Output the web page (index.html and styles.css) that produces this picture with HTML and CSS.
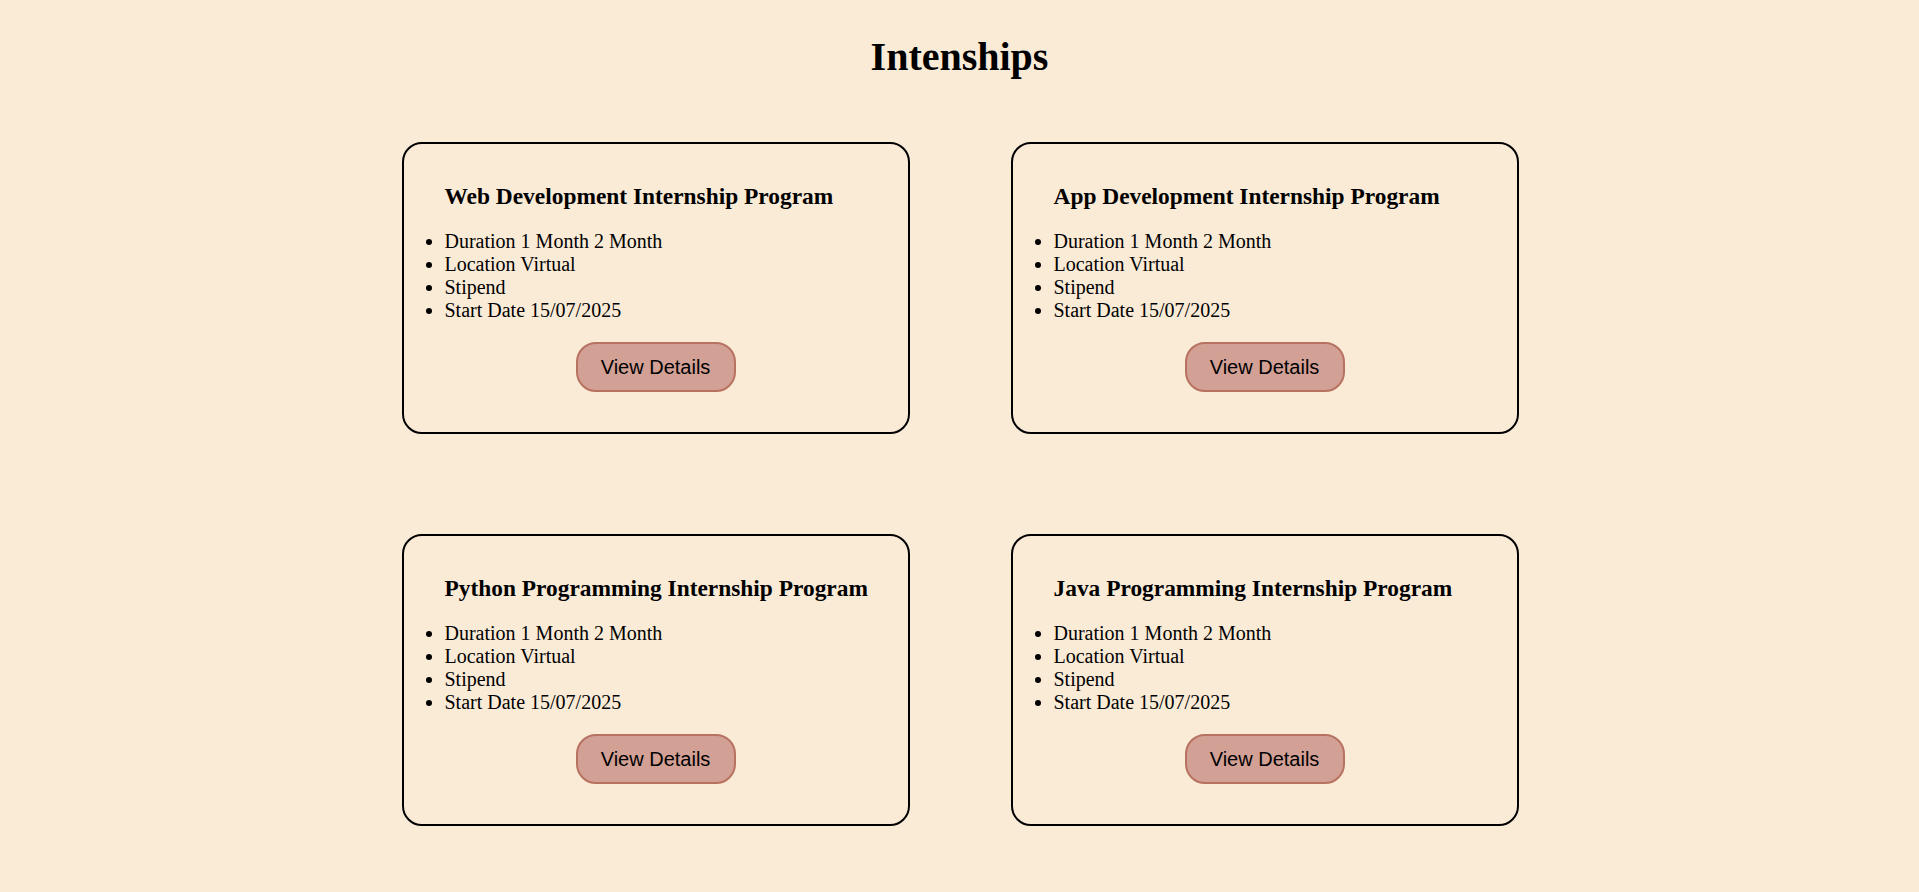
FILE: index.html
```html
<!DOCTYPE html>
<html lang="en">
<head>
<meta charset="utf-8">
<title>Intenships</title>
<link rel="stylesheet" href="styles.css">
</head>
<body>
  <h1 class="page-title">Intenships</h1>
  <main class="grid">
    <section class="card">
      <h3 class="card-title">Web Development Internship Program</h3>
      <ul class="details">
        <li>Duration 1 Month 2 Month</li>
        <li>Location Virtual</li>
        <li>Stipend</li>
        <li>Start Date 15/07/2025</li>
      </ul>
      <div class="actions"><button class="btn">View Details</button></div>
    </section>
    <section class="card">
      <h3 class="card-title">App Development Internship Program</h3>
      <ul class="details">
        <li>Duration 1 Month 2 Month</li>
        <li>Location Virtual</li>
        <li>Stipend</li>
        <li>Start Date 15/07/2025</li>
      </ul>
      <div class="actions"><button class="btn">View Details</button></div>
    </section>
    <section class="card">
      <h3 class="card-title">Python Programming Internship Program</h3>
      <ul class="details">
        <li>Duration 1 Month 2 Month</li>
        <li>Location Virtual</li>
        <li>Stipend</li>
        <li>Start Date 15/07/2025</li>
      </ul>
      <div class="actions"><button class="btn">View Details</button></div>
    </section>
    <section class="card">
      <h3 class="card-title">Java Programming Internship Program</h3>
      <ul class="details">
        <li>Duration 1 Month 2 Month</li>
        <li>Location Virtual</li>
        <li>Stipend</li>
        <li>Start Date 15/07/2025</li>
      </ul>
      <div class="actions"><button class="btn">View Details</button></div>
    </section>
  </main>
</body>
</html>
```

FILE: styles.css
```css
html, body {
  margin: 0;
  padding: 0;
  background: #faebd7;
}
body {
  font-family: "Liberation Serif", "Times New Roman", serif;
  color: #000;
  font-size: 20px;
}
.page-title {
  margin: 34px 0 0;
  font-size: 40px;
  line-height: 46px;
  font-weight: bold;
  text-align: center;
}
.grid {
  display: grid;
  grid-template-columns: 508px 508px;
  column-gap: 101px;
  row-gap: 100px;
  justify-content: center;
  margin-top: 62px;
  padding: 0 0 40px 1px;
}
.card {
  box-sizing: border-box;
  width: 508px;
  height: 292px;
  border: 2px solid #000;
  border-radius: 20px;
  padding: 0 20px 0 41px;
}
.card-title {
  margin: 39px 0 0;
  font-size: 23.4px;
  line-height: 27px;
  font-weight: bold;
}
.details {
  margin: 20px 0 0;
  padding: 0;
  line-height: 23px;
}
.actions {
  display: flex;
  justify-content: center;
  margin: 20px -20px 0 -41px;
}
.btn {
  box-sizing: border-box;
  width: 160px;
  height: 50px;
  font-family: "Liberation Sans", Arial, sans-serif;
  font-size: 20px;
  color: #000;
  background: #d2a095;
  border: 2px solid #b87262;
  border-radius: 20px;
  padding: 0;
  cursor: pointer;
}
```
